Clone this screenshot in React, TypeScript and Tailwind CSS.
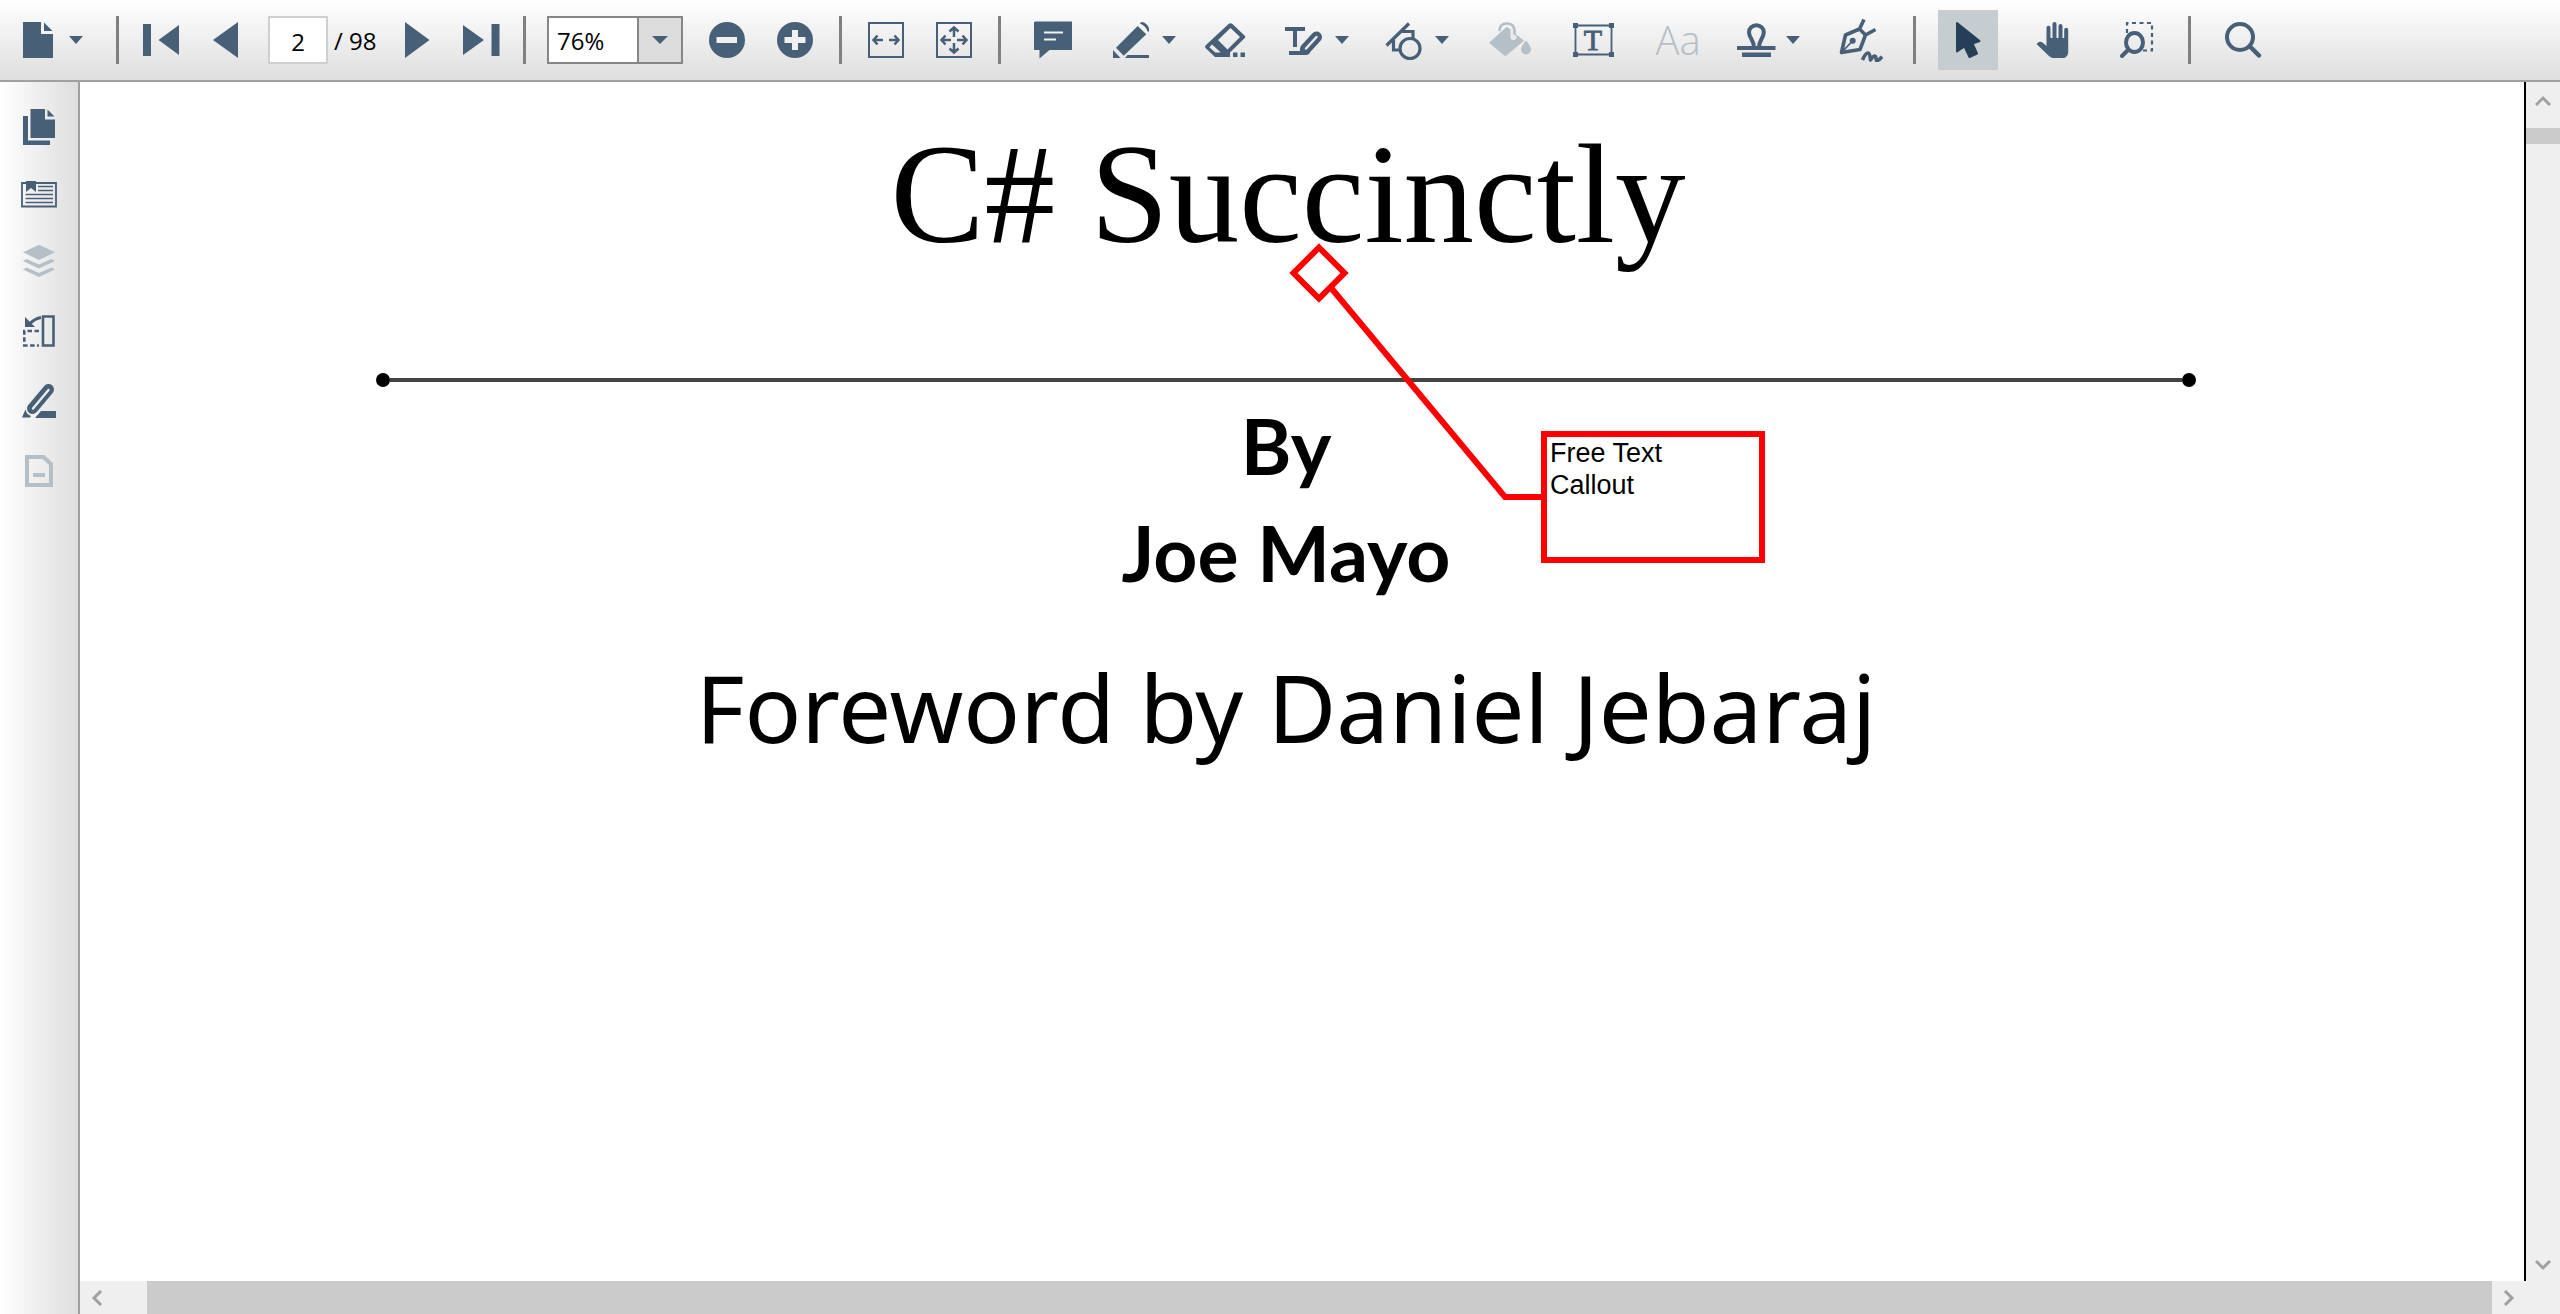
import React from "react";
import type { ReactNode } from "react";

type IconProps = { children: ReactNode; narrow?: boolean };

function Icon({ children, narrow }: IconProps) {
  return (
    <svg
      viewBox={narrow ? "0 0 36 44" : "0 0 44 44"}
      className={narrow ? "h-[44px] w-[36px]" : "h-[44px] w-[44px]"}
      fill="currentColor"
      aria-hidden="true"
    >
      {children}
    </svg>
  );
}

function Tool({
  label,
  className = "",
  disabled,
  children,
}: {
  label: string;
  className?: string;
  disabled?: boolean;
  children: ReactNode;
}) {
  return (
    <button
      type="button"
      aria-label={label}
      disabled={disabled}
      className={`flex shrink-0 items-center justify-center ${disabled ? "text-[#b5bfc8]" : "text-[#485f78]"} ${className}`}
    >
      {children}
    </button>
  );
}

function Caret({ label, className = "" }: { label: string; className?: string }) {
  return (
    <button
      type="button"
      aria-label={label}
      className={`flex h-11 w-5 shrink-0 items-center justify-center text-[#485f78] ${className}`}
    >
      <svg viewBox="0 0 14 8" className="h-2 w-3.5" fill="currentColor" aria-hidden="true">
        <path d="M0 0h14L7 8z" />
      </svg>
    </button>
  );
}

function Separator({ className = "" }: { className?: string }) {
  return <div className={`h-12 w-[3px] shrink-0 bg-[#808080] ${className}`} />;
}

function Toolbar() {
  return (
    <header className="flex h-[82px] shrink-0 items-center border-b-2 border-[#a0a0a0] bg-linear-to-b from-white to-[#dedede] pl-5">
      <Tool label="Open file">
        <Icon narrow>
          <path d="M3 4h18v12h12v24H3z" />
          <path d="M24 4.500v8.500h8.500z" />
        </Icon>
      </Tool>
      <Caret label="File menu" className="ml-2.5" />
      <Separator className="ml-[30px]" />
      <Tool label="First page" className="ml-[21px]">
        <Icon>
          <path d="M3 6h8v32H3zM39 7v30L18.500 22z" />
        </Icon>
      </Tool>
      <Tool label="Previous page" className="ml-6">
        <Icon narrow>
          <path d="M30 4v36L5 22z" />
        </Icon>
      </Tool>
      <input
        aria-label="Page number"
        defaultValue="2"
        className="ml-6 h-12 w-[60px] shrink-0 border-2 border-[#cfcfcf] bg-white pt-0.5 text-center text-2xl text-black"
      />
      <span className="w-[71px] shrink-0 pt-0.5 pl-1.5 text-2xl whitespace-nowrap text-black">/ 98</span>
      <Tool label="Next page">
        <Icon narrow>
          <path d="M6 4v36l24.500-18z" />
        </Icon>
      </Tool>
      <Tool label="Last page" className="ml-6">
        <Icon>
          <path d="M4 7v30l21-15zM32.500 6h8v32h-8z" />
        </Icon>
      </Tool>
      <Separator className="ml-5" />
      <div className="ml-[21px] flex h-12 w-[136px] shrink-0 border-2 border-[#868686] bg-white">
        <input
          aria-label="Zoom level"
          defaultValue="76%"
          className="min-w-0 flex-1 pt-0.5 pl-2 text-2xl text-black"
        />
        <button
          type="button"
          aria-label="Zoom levels"
          className="flex w-11 items-center justify-center border-l-2 border-[#868686] bg-[#dcdcdc] text-[#485f78]"
        >
          <svg viewBox="0 0 16 8" className="h-2 w-4" fill="currentColor" aria-hidden="true">
            <path d="M0 0h16L8 8z" />
          </svg>
        </button>
      </div>
      <Tool label="Zoom out" className="ml-[22px]">
        <Icon>
          <circle cx="22" cy="22" r="18" />
          <path d="M11.500 19h20.500v6H11.500z" fill="#f0f0f0" />
        </Icon>
      </Tool>
      <Tool label="Zoom in" className="ml-6">
        <Icon>
          <circle cx="22" cy="22" r="18" />
          <path d="M11.500 19H19v-7h6v7h7.500v6H25v7h-6v-7h-7.500z" fill="#f0f0f0" />
        </Icon>
      </Tool>
      <Separator className="ml-[22px]" />
      <Tool label="Fit width" className="ml-[22px]">
        <Icon>
          <g fill="none" stroke="currentColor" strokeWidth="2">
            <path d="M5 5h34v34H5z" />
            <path d="M9 22h10M13.500 17.500L9.500 22l4 4.500M25 22h10M30.500 17.500l4 4.500-4 4.500" strokeWidth="2.500" />
          </g>
        </Icon>
      </Tool>
      <Tool label="Fit page" className="ml-6">
        <Icon>
          <g fill="none" stroke="currentColor" strokeWidth="2">
            <path d="M5 5h34v34H5z" />
            <path
              d="M9 22h10M13.500 17.500L9.500 22l4 4.500M25 22h10M30.500 17.500l4 4.500-4 4.500M22 9v10M17.500 13.500L22 9.500l4.500 4M22 25v10M17.500 30.500l4.500 4 4.500-4"
              strokeWidth="2.500"
            />
          </g>
        </Icon>
      </Tool>
      <Separator className="ml-[22px]" />
      <Tool label="Sticky note" className="ml-[30px]">
        <Icon>
          <path d="M4 3.500h37V32H18.500L8.500 40.500V32H3V4.500z" />
          <path d="M13 13.500h19v2H13zM13 20.500h12v2H13z" fill="#f2f2f2" />
        </Icon>
      </Tool>
      <Tool label="Ink" className="ml-[34px]">
        <Icon>
          <path d="M7 29.700L28.700 8l8.600 8.300-22.600 21.500zM4 32v8h7.500zM18.500 37H40v3H16zM31 5q2-1.500 4-.5 4 2 5 6v3h-1.500q-1.500-5.500-7.500-8z" />
        </Icon>
      </Tool>
      <Caret label="Ink menu" className="ml-1.5" />
      <Tool label="Eraser" className="ml-6">
        <Icon>
          <path
            fillRule="evenodd"
            d="M2.500 27.500L25.500 6q2-1.500 4 0L42 18q.7 1-.2 2L27 34.500V39H12L2.500 30q-1-1.300 0-2.500zM15 22l9.500 9.500L37 19 27.500 10zM9 26.500l-2.700 2.700 6 5.300h5.500z"
          />
          <path d="M30 34.500h4.500V39H30zM37.500 34.500H42V39h-4.500z" />
        </Icon>
      </Tool>
      <Tool label="Text markup" className="ml-[34px]">
        <Icon>
          <path d="M4 9h20v4h-8v16h-4V13H4zM8 33h13v4H8z" />
          <path d="M35.500 19L24.500 31" fill="none" stroke="currentColor" strokeWidth="11" strokeLinecap="round" />
          <path d="M19 31v6h6q5-1 4-4z" />
          <path d="M35.500 19L25 30.500" fill="none" stroke="#e9e9e9" strokeWidth="2.500" strokeLinecap="round" />
        </Icon>
      </Tool>
      <Caret label="Text markup menu" className="ml-[7px]" />
      <Tool label="Shapes" className="ml-[29px]">
        <Icon>
          <g fill="none" stroke="currentColor" strokeWidth="3.200">
            <path d="M5.500 27.500L28 5.500M21 13.500h11V20M12.500 22v10H19" />
            <circle cx="29" cy="30.500" r="10" />
          </g>
        </Icon>
      </Tool>
      <Caret label="Shapes menu" className="ml-[7px]" />
      <Tool label="Fill color" disabled className="ml-9">
        <Icon>
          <path d="M1 24.700l17-15.200q1-.8 2 0L36 22.700 18.300 37.500q-1 .8-2 0z" />
          <path d="M25.500 19V11" fill="none" stroke="#eeeeee" strokeWidth="6" strokeLinecap="round" />
          <path d="M11.500 13q0-7.500 7.500-7.500 7 0 7.500 7v6" fill="none" stroke="currentColor" strokeWidth="2.600" />
          <circle cx="25.500" cy="18.500" r="2" fill="#e9e9e9" />
          <path d="M38 22.500q5 6 5 9a5 5 0 0 1-10 0q0-3 5-9z" />
        </Icon>
      </Tool>
      <Tool label="Free text" className="ml-[39px]">
        <Icon>
          <path d="M4.500 7.500h36v29h-36z" fill="none" stroke="currentColor" strokeWidth="1.800" />
          <path d="M2 5h5v5H2zM38 5h5v5h-5zM2 34h5v5H2zM38 34h5v5h-5z" />
          <text x="22" y="32" fontSize="30" fontFamily="Liberation Serif, serif" textAnchor="middle" stroke="currentColor" strokeWidth="0.800">
            T
          </text>
        </Icon>
      </Tool>
      <Tool label="Font" disabled className="ml-10 w-[46px] font-['Open_Sans',sans-serif] text-[40px] leading-[44px] font-light">
        Aa
      </Tool>
      <Tool label="Stamp" className="ml-[33px]">
        <Icon>
          <path d="M3 28h38.500v4H3zM8 34.500h29V39H8z" />
          <path
            d="M20 29.500C20 22 15 20 15 14.200A7.400 7 0 0 1 29.800 14.200C29.800 20 25 22 25 29.500"
            fill="none"
            stroke="currentColor"
            strokeWidth="4"
          />
        </Icon>
      </Tool>
      <Caret label="Stamp menu" className="ml-[5px]" />
      <Tool label="Signature" className="ml-9">
        <Icon>
          <g fill="none" stroke="currentColor" strokeWidth="3.600" strokeLinejoin="round">
            <path d="M2.500 34.500L6.500 17 20.500 11 26.500 17 21 31.500zM20.500 11L25 1.500M26.500 17L36.500 11.500" />
            <path d="M3 34L13.500 23" strokeWidth="1.800" />
            <path d="M23.500 42q3-7 5.500-7 2 0 2.500 7 3-5 5-3.500l1 4q3 0 5.500-4" />
          </g>
          <circle cx="13.700" cy="22.700" r="3" />
        </Icon>
      </Tool>
      <Separator className="ml-[30px]" />
      <button
        type="button"
        aria-label="Selection tool"
        aria-pressed="true"
        className="ml-[22px] flex h-[60px] w-[60px] shrink-0 items-center justify-center bg-[#c6cdd0] text-[#253f58]"
      >
        <Icon>
          <path
            d="M11 5v28.500l7.500-5L23.500 39l7.500-3.500-4.500-10 7-2.500z"
            stroke="currentColor"
            strokeWidth="2"
            strokeLinejoin="round"
          />
        </Icon>
      </button>
      <Tool label="Panning tool" className="ml-8">
        <Icon>
          <path d="M16.500 28V9.800a2 2 0 0 1 4 0V20h2V6a2 2 0 0 1 4 0v14h2V8a2 2 0 0 1 4 0v12h1.700v-8.200a2 2 0 0 1 4 0V34q0 4-4 6H23q-2 0-4-2L6.500 26q3-3.500 6-1.500z" />
        </Icon>
      </Tool>
      <Tool label="Marquee zoom" className="ml-10">
        <Icon>
          <g fill="none" stroke="currentColor">
            <path d="M13 15V5h25v27.500H28" strokeWidth="2.200" strokeDasharray="4 3.500" />
            <ellipse cx="20.500" cy="24.500" rx="8.500" ry="9.500" strokeWidth="4" />
            <path d="M14.500 31.500L8 38" strokeWidth="4" strokeLinecap="round" />
          </g>
        </Icon>
      </Tool>
      <Separator className="ml-[30px]" />
      <Tool label="Search" className="ml-[30px]">
        <Icon>
          <g fill="none" stroke="currentColor">
            <circle cx="19" cy="19" r="13" strokeWidth="4" />
            <path d="M29 28.500l9 9" strokeWidth="4.500" strokeLinecap="round" />
          </g>
        </Icon>
      </Tool>
    </header>
  );
}

function Sidebar() {
  return (
    <nav
      aria-label="Panels"
      className="flex w-20 shrink-0 flex-col items-center gap-[26px] border-r-2 border-[#a0a0a0] bg-linear-to-r from-white to-[#dedede] pt-[23px]"
    >
      <div className="flex flex-col gap-[23px]">
        <Tool label="Page thumbnails">
          <Icon>
            <path d="M13.500 4H28v10.500h10V33H13.500zM30.500 4.500v7h7zM6 11h5v24.500h22v4.500H6z" />
          </Icon>
        </Tool>
        <Tool label="Bookmarks">
          <Icon>
            <path d="M5 11h34v23.500H5z" fill="none" stroke="currentColor" strokeWidth="1.800" />
            <path d="M9 9h10v11l-5-4-5 4z" />
            <path d="M21 14.500h15M21 18.500h15M8.500 22.500H36M8.500 26.500H36M8.500 30.500H36" fill="none" stroke="currentColor" strokeWidth="1.600" />
          </Icon>
        </Tool>
        <Tool label="Layers" disabled>
          <Icon>
            <path d="M6 13.300L22 5.700l16 7.600L22 21zM6 22l3.500-2L22 25.500 34.500 20l3.500 2-16 7.500zM6 30.500l3.500-2L22 34l12.500-5.500 3.500 2L22 38z" />
          </Icon>
        </Tool>
      </div>
      <Tool label="Organize pages">
        <Icon>
          <path d="M26 7.500h10.500v29H26z" fill="none" stroke="currentColor" strokeWidth="2.600" />
          <path d="M8 8v10h10z" />
          <path d="M24 8.500q-6 1-11 6" fill="none" stroke="currentColor" strokeWidth="3" />
          <path d="M22 22H7.300v14.500H22" fill="none" stroke="currentColor" strokeWidth="2.600" strokeDasharray="4.500 2.500" />
        </Icon>
      </Tool>
      <Tool label="Redaction">
        <Icon>
          <path d="M31.500 10.500L15.500 29.500" fill="none" stroke="currentColor" strokeWidth="11" strokeLinecap="round" />
          <path d="M31.500 11L16 29.500" fill="none" stroke="#ececec" strokeWidth="2.400" strokeLinecap="round" />
          <path d="M8.500 30.500q1 5 5.500 6.500l-1 1.500H5zM18 39l6-7h15v7z" />
        </Icon>
      </Tool>
      <Tool label="Form fields" disabled>
        <Icon>
          <path d="M10 8h16.500l7.500 7v21H10z" fill="none" stroke="currentColor" strokeWidth="4" />
          <path d="M16 24h12v4H16z" />
        </Icon>
      </Tool>
    </nav>
  );
}

function Chevron({ d, label, className = "" }: { d: string; label: string; className?: string }) {
  return (
    <button type="button" aria-label={label} className={`flex shrink-0 items-center justify-center text-[#a0a0a0] ${className}`}>
      <svg viewBox="0 0 16 16" className="h-4 w-4" fill="none" stroke="currentColor" strokeWidth="3" aria-hidden="true">
        <path d={d} />
      </svg>
    </button>
  );
}

function Callout() {
  return (
    <div className="absolute top-[158px] left-[1206px] text-left text-black">
      <svg viewBox="0 0 256 264" className="h-[264px] w-[256px]" fill="none" stroke="#ff0000" strokeWidth="6" aria-hidden="true">
        <path d="M33 7.500L58.500 33 33 58.500 7.500 33z" />
        <path d="M46 49L219 257h37" />
      </svg>
      <div className="absolute top-[191px] left-[255px] h-[132px] w-[224px] border-6 border-[#ff0000] pl-[3px] font-['Liberation_Sans',sans-serif] text-[27px] leading-8">
        Free Text
        <br />
        Callout
      </div>
    </div>
  );
}

function Page() {
  return (
    <main className="relative min-w-0 flex-1 overflow-hidden border-r-2 border-black bg-white pr-8 text-center text-black">
      <h1 className="pt-8 pl-1 font-['Liberation_Serif',serif] text-[141px] leading-[160px]">C# Succinctly</h1>
      <div className="mx-[296px] mt-[98px] flex h-4 items-center">
        <div className="size-3.5 rounded-full bg-black" />
        <div className="h-1 flex-1 bg-[#444444]" />
        <div className="size-3.5 rounded-full bg-black" />
      </div>
      <p className="mt-1 font-['Lato',sans-serif] text-[77px] leading-[107px] font-bold">
        By
        <br />
        Joe Mayo
      </p>
      <p className="mt-9 font-['Noto_Sans',sans-serif] text-[94px] leading-[130px]">Foreword by Daniel Jebaraj</p>
      <Callout />
    </main>
  );
}

export default function App() {
  return (
    <div className="flex h-screen flex-col overflow-hidden bg-white font-['Open_Sans',sans-serif]">
      <Toolbar />
      <div className="flex min-h-0 flex-1">
        <Sidebar />
        <div className="flex min-w-0 flex-1 flex-col">
          <div className="flex min-h-0 flex-1">
            <Page />
            <div className="flex w-[34px] shrink-0 flex-col bg-[#efefef]">
              <Chevron label="Scroll up" d="M1 12l7-7 7 7" className="h-[46px] pb-2" />
              <div className="h-4 bg-[#cbcbcb]" />
              <div className="flex-1" />
              <Chevron label="Scroll down" d="M1 4l7 7 7-7" className="h-8" />
            </div>
          </div>
          <div className="flex h-[33px] shrink-0 bg-[#efefef]">
            <Chevron label="Scroll left" d="M12 1L5 8l7 7" className="w-[34px]" />
            <div className="ml-[33px] flex-1 bg-[#cbcbcb]" />
            <Chevron label="Scroll right" d="M4 1l7 7-7 7" className="mr-[34px] w-[34px]" />
          </div>
        </div>
      </div>
    </div>
  );
}
